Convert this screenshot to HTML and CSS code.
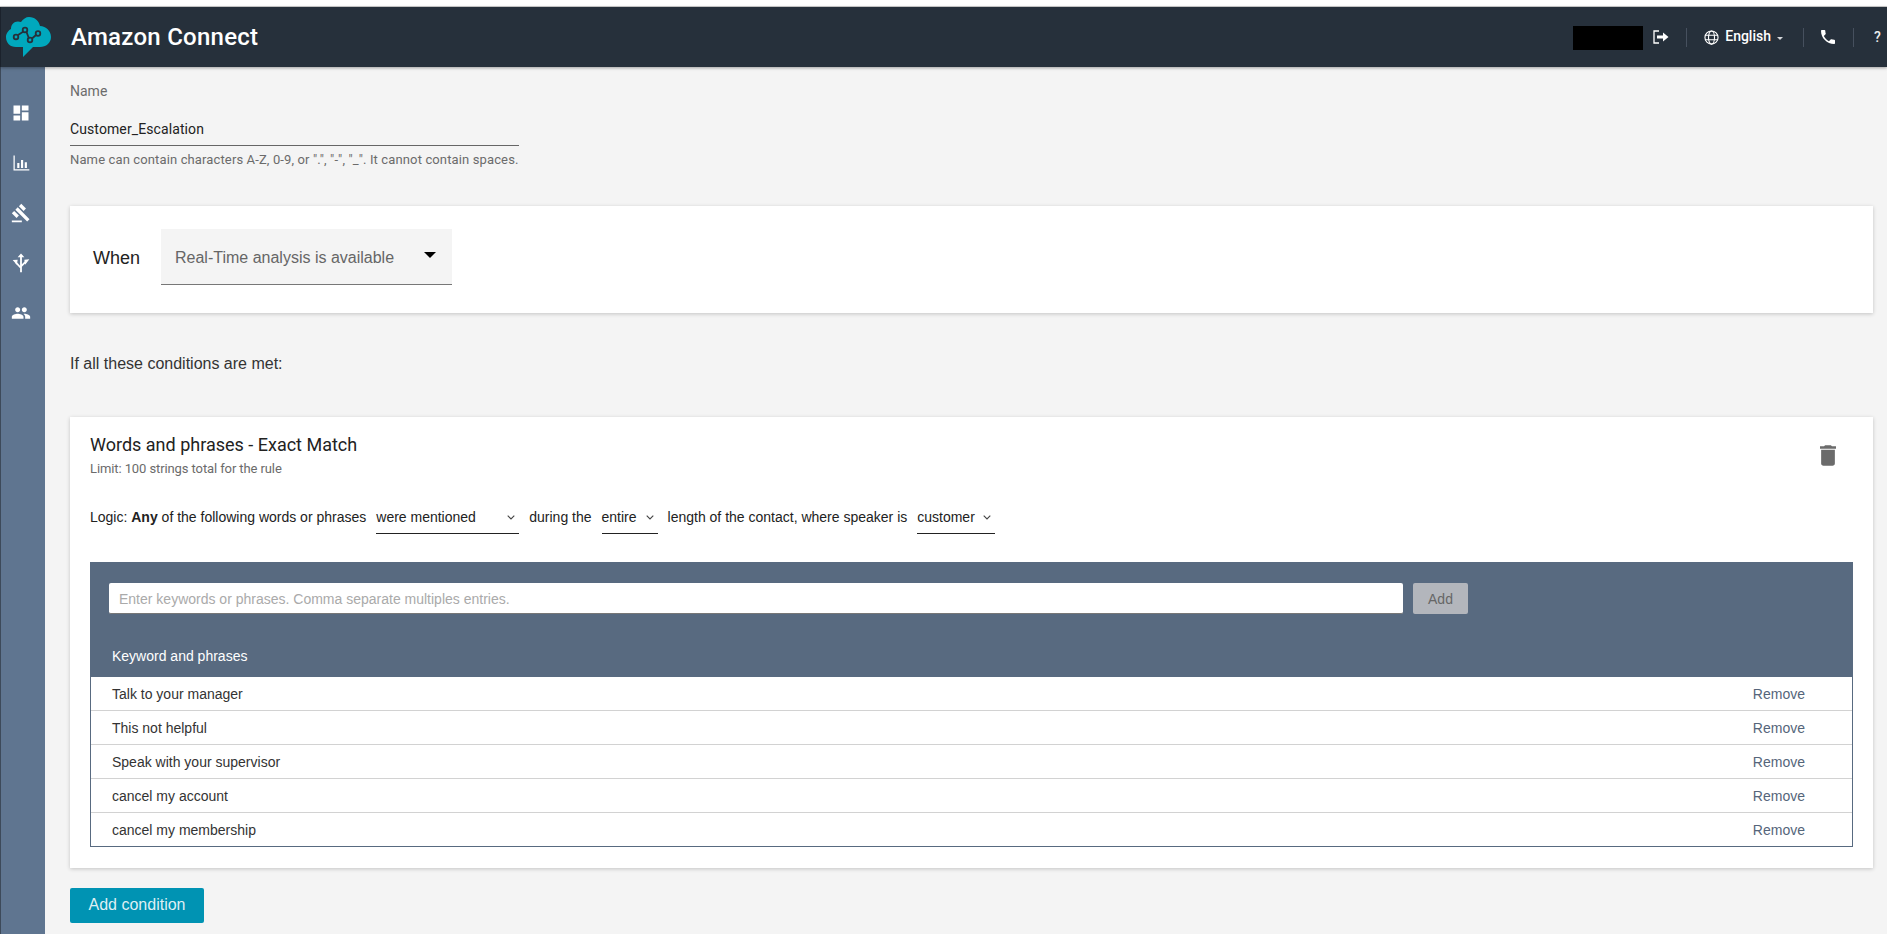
FILE: index.html
```html
<!DOCTYPE html>
<html lang="en">
<head>
<meta charset="utf-8">
<title>Amazon Connect</title>
<link rel="stylesheet" href="styles.css">
</head>
<body>
<div class="top-strip"></div>
<header class="app-header">
  <svg class="logo" viewBox="6 16 46 42" aria-hidden="true">
    <path fill="#00a8bd" d="M16 47C10 47 6 43 6 37C6 33 9 30 11 29C11 24 15 20 21 22C23 19 26 17 29 17C35 17 39 21 40 26C46 26 51 31 51 37C51 43 46 47 40 47H33L23 57V47Z"/>
    <g fill="none" stroke="#26303b" stroke-width="1.8">
      <path d="M18 35l5.500-3.500M26.500 32l2.500 6.500M32 38.500l4-3.500"/>
      <circle cx="16" cy="37" r="2.300"/><circle cx="25" cy="30" r="2.300"/><circle cx="30" cy="40" r="2.300"/><circle cx="38" cy="33.500" r="2.300"/>
    </g>
  </svg>
  <div class="brand">Amazon Connect</div>
  <div class="header-tools">
    <div class="redacted"></div>
    <svg class="tool-signout" viewBox="0 0 16 14" aria-hidden="true">
      <path fill="none" stroke="#fff" stroke-width="1.3" d="M6 1H1v12h5"/>
      <path fill="#fff" d="M4 5.500h6V2.500L15.500 7 10 11.500V8.500H4z"/>
    </svg>
    <span class="divider divider-a"></span>
    <svg class="tool-globe" viewBox="0 0 16 16" aria-hidden="true">
      <g fill="none" stroke="#fff" stroke-width="1.2">
        <circle cx="8" cy="8" r="7"/><ellipse cx="8" cy="8" rx="3.200" ry="7"/><path d="M1 5.600h14M1 10.400h14"/>
      </g>
    </svg>
    <span class="language">English</span>
    <span class="caret"></span>
    <span class="divider divider-b"></span>
    <svg class="tool-phone" viewBox="3 3 18 18" aria-hidden="true">
      <path fill="#fff" d="M6.620 10.790c1.440 2.830 3.760 5.140 6.590 6.590l2.200-2.200c.27-.27.67-.36 1.020-.24 1.120.37 2.330.57 3.570.57.55 0 1 .45 1 1V20c0 .55-.45 1-1 1-9.390 0-17-7.610-17-17 0-.55.45-1 1-1h3.500c.55 0 1 .45 1 1 0 1.250.2 2.450.57 3.570.11.35.03.74-.25 1.020l-2.200 2.200z"/>
    </svg>
    <span class="divider divider-c"></span>
    <span class="help">?</span>
  </div>
</header>
<div class="layout">
  <nav class="sidebar">
    <svg class="nav-icon" viewBox="0 0 24 24" aria-hidden="true"><path d="M3 13h8V3H3v10zm0 8h8v-6H3v6zm10 0h8V11h-8v10zm0-18v6h8V3h-8z"/></svg>
    <svg class="nav-icon" viewBox="0 0 24 24" aria-hidden="true"><path d="M3 3h1.500v16.500H22V21H3zM7.500 12h2.600v6H7.500zM12 8.500h2.600V18H12zM16.500 11h2.600v7h-2.600z"/></svg>
    <svg class="nav-icon" viewBox="0 0 24 24" aria-hidden="true"><path d="M1 21h12v2H1zM5.245 8.070l2.830-2.827 14.140 14.142-2.828 2.828zM12.317 1l5.657 5.656-2.830 2.830-5.654-5.660zM3.825 9.485l5.657 5.657-2.828 2.828-5.657-5.657z"/></svg>
    <svg class="nav-icon" viewBox="0 0 24 24" aria-hidden="true">
      <path d="M12 .5l4 4.500H8zM2 8.500l6-.5-1 6zM22 7.500l-6 .5 1 6z"/>
      <path class="nav-stroke" d="M12 4v19M12 18l-6.500-7M12 16l6-6"/>
    </svg>
    <svg class="nav-icon" viewBox="0 0 24 24" aria-hidden="true"><path d="M16 11c1.660 0 2.990-1.340 2.990-3S17.660 5 16 5c-1.660 0-3 1.340-3 3s1.340 3 3 3zm-8 0c1.660 0 2.990-1.340 2.990-3S9.660 5 8 5C6.340 5 5 6.340 5 8s1.340 3 3 3zm0 2c-2.330 0-7 1.170-7 3.500V19h14v-2.500c0-2.330-4.670-3.500-7-3.500zm8 0c-.29 0-.62.02-.97.05 1.160.84 1.970 1.970 1.970 3.450V19h6v-2.500c0-2.330-4.670-3.500-7-3.500z"/></svg>
  </nav>
  <main class="content">
    <div class="name-field">
      <label class="field-label" for="rule-name">Name</label>
      <input class="name-input" id="rule-name" value="Customer_Escalation">
      <div class="field-hint">Name can contain characters A-Z, 0-9, or ".", "-", "_". It cannot contain spaces.</div>
    </div>

    <section class="card when-card">
      <span class="when-label">When</span>
      <div class="when-select">
        <span>Real-Time analysis is available</span>
        <span class="when-arrow"></span>
      </div>
    </section>

    <p class="conditions-title">If all these conditions are met:</p>

    <section class="card condition-card">
      <div class="condition-head">
        <div>
          <h2 class="condition-title">Words and phrases - Exact Match</h2>
          <div class="condition-limit">Limit: 100 strings total for the rule</div>
        </div>
        <svg class="trash" viewBox="5 3 14 18" aria-hidden="true"><path d="M6 19c0 1.100.9 2 2 2h8c1.100 0 2-.9 2-2V7H6v12zM19 4h-3.500l-1-1h-5l-1 1H5v2h14V4z"/></svg>
      </div>
      <div class="logic-row">
        <span>Logic: <b>Any</b> of the following words or phrases</span>
        <div class="inline-select select-mentioned"><span>were mentioned</span><svg class="chevron" viewBox="0 0 8 5" aria-hidden="true"><path d="M.7.7L4 4l3.300-3.300"/></svg></div>
        <span>during the</span>
        <div class="inline-select select-entire"><span>entire</span><svg class="chevron" viewBox="0 0 8 5" aria-hidden="true"><path d="M.7.7L4 4l3.300-3.300"/></svg></div>
        <span>length of the contact, where speaker is</span>
        <div class="inline-select select-customer"><span>customer</span><svg class="chevron" viewBox="0 0 8 5" aria-hidden="true"><path d="M.7.7L4 4l3.300-3.300"/></svg></div>
      </div>
      <div class="keyword-panel">
        <div class="keyword-add">
          <input class="keyword-input" placeholder="Enter keywords or phrases. Comma separate multiples entries.">
          <button class="add-button" type="button">Add</button>
        </div>
        <div class="keyword-head">Keyword and phrases</div>
        <ul class="keyword-list">
          <li class="keyword-row"><span>Talk to your manager</span><a class="remove">Remove</a></li>
          <li class="keyword-row"><span>This not helpful</span><a class="remove">Remove</a></li>
          <li class="keyword-row"><span>Speak with your supervisor</span><a class="remove">Remove</a></li>
          <li class="keyword-row"><span>cancel my account</span><a class="remove">Remove</a></li>
          <li class="keyword-row"><span>cancel my membership</span><a class="remove">Remove</a></li>
        </ul>
      </div>
    </section>

    <button class="add-condition" type="button">Add condition</button>
  </main>
</div>
</body>
</html>
```

FILE: styles.css
```css
* { box-sizing: border-box; }
html, body { margin: 0; height: 100%; overflow: hidden; }
body {
  width: 1887px;
  height: 934px;
  background: #f4f4f4;
  color: #222;
  font-family: "Liberation Sans", Arial, sans-serif;
  font-size: 14px;
}
.top-strip { height: 7px; background: #fff; border-bottom: 1px solid #cfcfcf; }
.app-header {
  position: relative;
  z-index: 2;
  height: 60px;
  display: flex;
  align-items: center;
  background: #26303b;
  border-left: 1px solid #1b222c;
  box-shadow: 0 1px 3px rgba(0, 0, 0, .35);
}
.logo { width: 46px; height: 42px; margin-left: 5px; flex: none; }
.brand {
  margin-left: 19px;
  color: #fff;
  font-family: Roboto, sans-serif;
  font-weight: 500;
  font-size: 24px;
  letter-spacing: .25px;
}
.header-tools { margin-left: auto; display: flex; align-items: center; color: #fff; }
.redacted { width: 70px; height: 24px; background: #000; margin-top: 1px; }
.tool-signout { width: 16px; height: 14px; margin-left: 10px; }
.divider { width: 1px; height: 19px; background: #46505e; }
.divider-a { margin-left: 17px; }
.tool-globe { width: 15px; height: 15px; margin-left: 17px; }
.language {
  margin: 0 0 2px 6px;
  font-family: Roboto, sans-serif;
  font-weight: 500;
  font-size: 14px;
}
.caret {
  margin: 2px 0 0 6px;
  border-left: 3px solid transparent;
  border-right: 3px solid transparent;
  border-top: 3px solid #d5d8dc;
}
.divider-b { margin-left: 20px; }
.tool-phone { width: 14px; height: 14px; margin-left: 17px; }
.divider-c { margin-left: 18px; }
.help { margin-left: 20px; width: 13px; font-size: 14px; font-family: Roboto, sans-serif; font-weight: 500; color: #eee; }

.layout { display: flex; height: 867px; }
.sidebar {
  width: 45px;
  flex: none;
  display: flex;
  flex-direction: column;
  align-items: center;
  gap: 30px;
  padding: 36px 5px 0 0;
  background: #5f7590;
  border-left: 1px solid #3d4a5a;
}
.nav-icon { width: 20px; height: 20px; fill: #fff; }
.nav-stroke { fill: none; stroke: #fff; stroke-width: 2.2; }
.content { flex: 1; min-width: 0; padding: 16px 14px 0 25px; }

.name-field { width: 449px; }
.field-label {
  display: block;
  height: 16px;
  line-height: 16px;
  font-family: Roboto, sans-serif;
  font-size: 14px;
  color: #6b6b6b;
}
.name-input {
  display: block;
  width: 100%;
  height: 25px;
  margin-top: 22px;
  padding: 0 0 9px;
  border: 0;
  border-bottom: 1px solid #666;
  background: transparent;
  outline: 0;
  font-family: Roboto, sans-serif;
  font-size: 14px;
  letter-spacing: .1px;
  color: #222;
}
.field-hint {
  margin-top: 7px;
  line-height: 14px;
  font-family: Roboto, sans-serif;
  font-size: 13px;
  letter-spacing: .13px;
  white-space: nowrap;
  color: #6b6b6b;
}

.card { background: #fff; box-shadow: 0 1px 4px rgba(0, 0, 0, .2); }
.when-card {
  display: flex;
  align-items: center;
  height: 107px;
  margin-top: 39px;
  padding: 0 0 5px 23px;
}
.when-label { width: 68px; margin-top: 2px; font-size: 18px; }
.when-select {
  width: 291px;
  height: 56px;
  display: flex;
  align-items: center;
  justify-content: space-between;
  padding: 3px 16px 0 14px;
  background: #f4f4f4;
  border-bottom: 1px solid #777;
  font-size: 16px;
  color: #666;
}
.when-arrow {
  margin-bottom: 6px;
  border-left: 6px solid transparent;
  border-right: 6px solid transparent;
  border-top: 6px solid #000;
}
.conditions-title { margin: 41px 0 43px; line-height: 20px; font-size: 16px; color: #333; }

.condition-card { height: 451px; padding: 0 20px; }
.condition-head { display: flex; justify-content: space-between; padding-top: 18px; height: 82px; }
.condition-title {
  margin: 0;
  line-height: 20px;
  font-family: Roboto, sans-serif;
  font-weight: 400;
  font-size: 18px;
  color: #222;
}
.condition-limit {
  margin-top: 7px;
  line-height: 14px;
  font-family: Roboto, sans-serif;
  font-size: 13px;
  letter-spacing: -.1px;
  color: #6b6b6b;
}
.trash { width: 16px; height: 21px; margin: 10px 17px 0 0; fill: #6b6b6b; }
.logic-row {
  display: flex;
  align-items: flex-start;
  gap: 10px;
  height: 63px;
  line-height: 37px;
  white-space: nowrap;
}
.logic-row b { color: #222; }
.inline-select {
  height: 35px;
  display: flex;
  align-items: center;
  justify-content: space-between;
  padding: 2px 4px 0 0;
  border-bottom: 1px solid #222;
}
.select-mentioned { width: 143px; }
.select-entire { width: 56px; }
.select-customer { width: 78px; }
.chevron { width: 8px; height: 5px; fill: none; stroke: #444; stroke-width: 1.1; margin-top: 1px; }

.keyword-panel { background: #586a80; }
.keyword-add { display: flex; gap: 10px; padding: 21px 0 0 19px; }
.keyword-input {
  width: 1294px;
  height: 31px;
  padding: 1px 10px 0;
  border: 0;
  border-bottom: 1px solid #777;
  border-radius: 2px;
  background: #fff;
  outline: 0;
  font-family: "Liberation Sans", Arial, sans-serif;
  font-size: 14px;
}
.keyword-input::placeholder { color: #aaa; opacity: 1; }
.add-button {
  width: 55px;
  height: 31px;
  padding: 0;
  border: 0;
  border-radius: 2px;
  background: #b3b6bc;
  color: #666;
  font-family: "Liberation Sans", Arial, sans-serif;
  font-size: 14px;
}
.keyword-head { height: 63px; padding: 32px 0 0 22px; line-height: 20px; font-size: 14px; color: #fff; }
.keyword-list {
  margin: 0;
  padding: 0;
  list-style: none;
  background: #fff;
  border: 1px solid #586a80;
  border-top: 0;
}
.keyword-row {
  height: 34px;
  display: flex;
  align-items: center;
  justify-content: space-between;
  padding: 0 47px 0 21px;
  border-bottom: 1px solid #d2d2d2;
  color: #333;
}
.keyword-row:last-child { height: 33px; border-bottom: 0; }
.remove { color: #55657a; }
.add-condition {
  display: block;
  width: 134px;
  height: 35px;
  margin-top: 20px;
  padding: 0 0 2px;
  border: 0;
  border-radius: 2px;
  background: #0093b3;
  color: #dfeff3;
  font-family: "Liberation Sans", Arial, sans-serif;
  font-size: 16px;
}
```
